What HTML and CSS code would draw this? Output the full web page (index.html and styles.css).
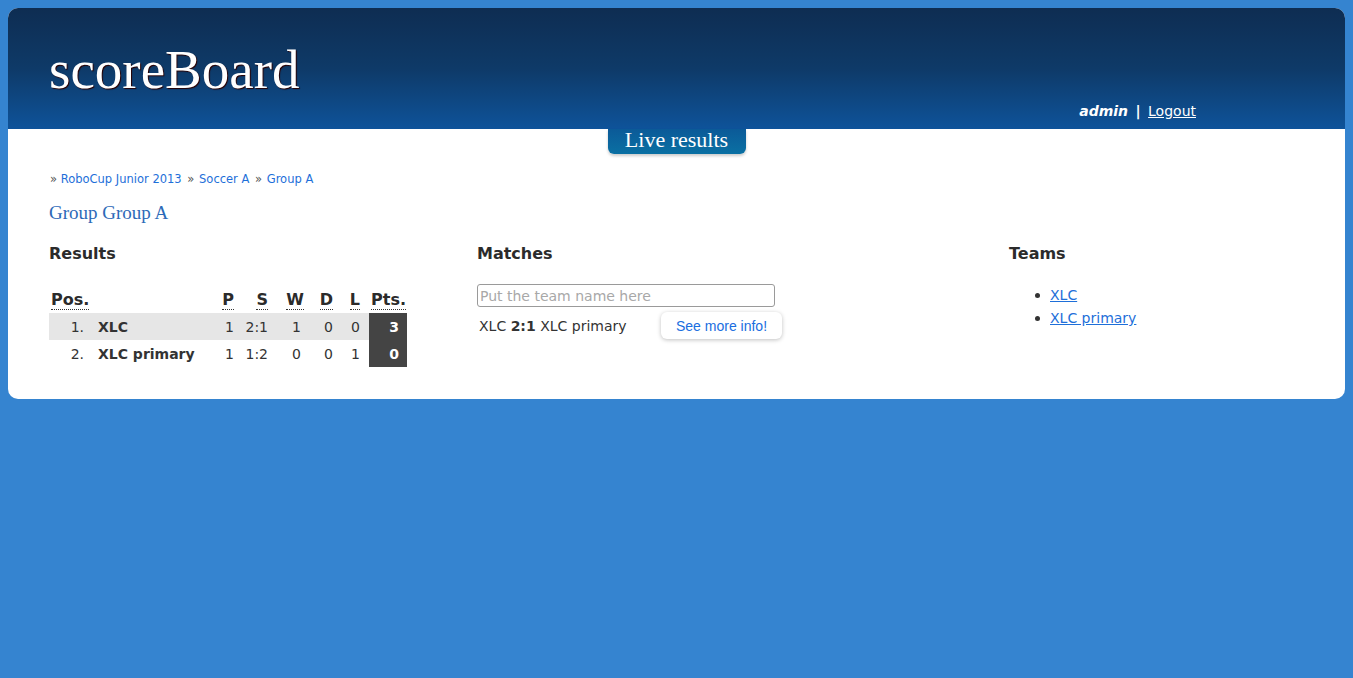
FILE: index.html
```html
<!DOCTYPE html>
<html>
<head>
<meta charset="utf-8">
<title>scoreBoard</title>
<link rel="stylesheet" href="styles.css">
</head>
<body>
<div class="page">
  <header class="header">
    <h1 class="title">scoreBoard</h1>
    <div class="user"><em class="uname">admin</em> <b class="sep">|</b> <a href="#" class="logout">Logout</a></div>
  </header>
  <div class="tab">Live results</div>
  <main class="content">
    <div class="crumbs"><span class="raquo first">»</span> <a href="#">RoboCup Junior 2013</a> <span class="raquo">»</span> <a href="#">Soccer A</a> <span class="raquo">»</span> <a href="#">Group A</a></div>
    <h2 class="group">Group Group A</h2>
    <div class="cols">
      <section>
        <h3 class="sec">Results</h3>
        <table class="results">
          <colgroup>
            <col class="c-pos"><col class="c-name"><col class="c-p"><col class="c-s"><col class="c-w"><col class="c-d"><col class="c-l"><col class="c-pts">
          </colgroup>
          <thead>
            <tr>
              <th colspan="2" class="th-pos"><abbr title="Position">Pos.</abbr></th>
              <th class="num"><abbr title="Played">P</abbr></th>
              <th class="num"><abbr title="Score">S</abbr></th>
              <th class="num"><abbr title="Won">W</abbr></th>
              <th class="num"><abbr title="Draw">D</abbr></th>
              <th class="num lcol"><abbr title="Lost">L</abbr></th>
              <th class="num ptsh"><abbr title="Points">Pts.</abbr></th>
            </tr>
          </thead>
          <tbody>
            <tr class="odd">
              <td class="pos">1.</td><td class="name">XLC</td>
              <td class="num">1</td><td class="num">2:1</td><td class="num wcol">1</td><td class="num">0</td><td class="num lcol">0</td><td class="pts">3</td>
            </tr>
            <tr>
              <td class="pos">2.</td><td class="name">XLC primary</td>
              <td class="num">1</td><td class="num">1:2</td><td class="num wcol">0</td><td class="num">0</td><td class="num lcol">1</td><td class="pts">0</td>
            </tr>
          </tbody>
        </table>
      </section>
      <section>
        <h3 class="sec">Matches</h3>
        <input class="search" type="text" placeholder="Put the team name here">
        <div class="match">
          <span class="mtext">XLC <b>2:1</b> XLC primary</span>
          <button class="more">See more info!</button>
        </div>
      </section>
      <section>
        <h3 class="sec">Teams</h3>
        <ul class="teams">
          <li><a href="#">XLC</a></li>
          <li><a href="#">XLC primary</a></li>
        </ul>
      </section>
    </div>
  </main>
</div>
</body>
</html>
```

FILE: styles.css
```css
html, body {
  margin: 0;
  padding: 0;
}
body {
  background: #3584d0;
  padding: 8px;
  font-family: "DejaVu Sans", Verdana, sans-serif;
  color: #333;
}
.page {
  background: #fff;
  border-radius: 10px;
  overflow: hidden;
}
.header {
  height: 121px;
  box-sizing: border-box;
  background: linear-gradient(to bottom, #0e2d52 0%, #0e3a68 50%, #0e539a 100%);
  display: flex;
  justify-content: space-between;
  padding: 0 149px 0 41px;
}
.title {
  margin: 0;
  padding-top: 34px;
  font-family: "Liberation Serif", "Times New Roman", serif;
  font-weight: normal;
  font-size: 55px;
  line-height: 55px;
  color: #fff;
  text-shadow: 1px 1px 1px #2a0000;
}
.user {
  align-self: flex-end;
  margin-bottom: 9px;
  font-size: 14px;
  line-height: 17px;
  color: #fff;
}
.uname {
  font-weight: bold;
  font-style: italic;
}
.sep {
  margin: 0 3px;
}
.logout {
  color: #fff;
}
.tab {
  width: 138px;
  margin: 0 auto;
  height: 21px;
  padding-bottom: 4px;
  line-height: 21px;
  text-align: center;
  font-family: "Liberation Serif", "Times New Roman", serif;
  font-size: 22px;
  color: #fff;
  background: linear-gradient(to bottom, #0b5a98, #0a70a3);
  border-radius: 0 0 6px 6px;
  box-shadow: 0 2px 3px rgba(0,0,0,0.2);
}
.content {
  padding: 18px 41px 32px 41px;
}
.crumbs {
  font-size: 11.5px;
  line-height: 14px;
  color: #444;
}
.crumbs a {
  color: #1e6fd9;
  text-decoration: none;
}
.raquo {
  color: #555;
  margin: 0 1px 0 2px;
}
.raquo.first {
  margin: 0 0 0 1px;
}
.group {
  margin: 16px 0 0 0;
  font-family: "Liberation Serif", "Times New Roman", serif;
  font-weight: normal;
  font-size: 19px;
  line-height: 22px;
  color: #2d6ab8;
}
.cols {
  display: grid;
  grid-template-columns: 428px 532px 1fr;
  margin-top: 20px;
}
.sec {
  margin: 0;
  font-size: 16px;
  line-height: 19px;
  font-weight: bold;
  color: #2b2b2b;
}
.results {
  margin-top: 27px;
  border-collapse: collapse;
  table-layout: fixed;
  width: 358px;
  font-size: 14px;
}
.c-pos { width: 43px; }
.c-name { width: 122px; }
.c-p { width: 22px; }
.c-s { width: 34px; }
.c-w { width: 36px; }
.c-d { width: 29px; }
.c-l { width: 34px; }
.c-pts { width: 38px; }
.results th {
  font-size: 16px;
  line-height: 19px;
  font-weight: bold;
  padding: 0 2px 4px 2px;
  color: #2b2b2b;
}
.results th.th-pos {
  text-align: left;
}
.results abbr {
  text-decoration: none;
  border-bottom: 1px dotted #333;
}
.results td {
  height: 27px;
  box-sizing: border-box;
  padding: 2px 2px 0 2px;
  line-height: 25px;
  white-space: nowrap;
}
.results .num {
  text-align: right;
}
.results td.wcol {
  padding-right: 5px;
}
.results .lcol {
  padding-right: 9px;
}
.results th.ptsh {
  padding-right: 2px;
}
.results td.pos {
  text-align: right;
  padding-right: 8px;
}
.results td.name {
  font-weight: bold;
  padding-left: 6px;
}
.results tr.odd td {
  background: #e6e6e6;
}
.results td.pts,
.results tr.odd td.pts {
  background: #444;
  color: #fff;
  font-weight: bold;
  text-align: right;
  padding-right: 8px;
}
.search {
  display: block;
  margin-top: 21px;
  width: 298px;
  height: 23px;
  box-sizing: border-box;
  border: 1px solid #9a9a9a;
  border-radius: 3px;
  padding: 0 2px;
  font-family: "DejaVu Sans", Verdana, sans-serif;
  font-size: 14px;
  color: #333;
  background: #fff;
}
.search::placeholder {
  color: #a8a8a8;
}
.match {
  display: flex;
  align-items: center;
  margin-top: 5px;
  font-size: 14px;
}
.mtext {
  width: 182px;
  padding-left: 2px;
}
.more {
  height: 27px;
  width: 121px;
  border: none;
  border-radius: 6px;
  background: #fff;
  box-shadow: 0 1px 4px rgba(0,0,0,0.25);
  font-family: "Liberation Sans", Arial, sans-serif;
  font-size: 14px;
  color: #1a6ee0;
  padding: 0;
}
.teams {
  margin: 21px 0 0 0;
  padding-left: 41px;
  font-size: 14px;
  line-height: 23px;
  list-style: none;
}
.teams li::before {
  content: "";
  display: inline-block;
  width: 5px;
  height: 5px;
  border-radius: 50%;
  background: #333;
  margin-left: -15px;
  margin-right: 10px;
  vertical-align: 2px;
}
.teams a {
  color: #1e6fd9;
}
```
